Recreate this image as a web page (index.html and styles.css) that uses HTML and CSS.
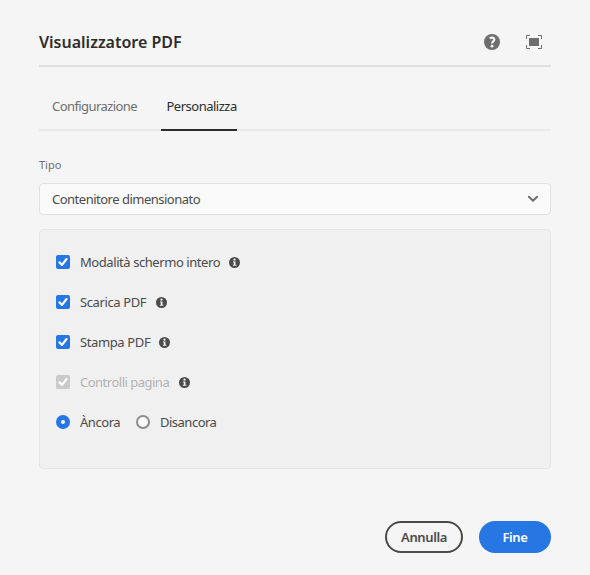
FILE: index.html
```html
<!DOCTYPE html>
<html lang="it">
<head>
<meta charset="utf-8">
<title>Visualizzatore PDF</title>
<link rel="stylesheet" href="styles.css">
</head>
<body>
<svg width="0" height="0" class="defs">
  <symbol id="info" viewBox="0 0 11 11"><circle cx="5.5" cy="5.5" r="5.5" fill="#4b4b4b"/><circle cx="5.5" cy="2.7" r="1.15" fill="#f0f0f0"/><path d="M4 4.5h2.5v3.3H7.4v1H3.9v-1h.9V5.5H4z" fill="#f0f0f0"/></symbol>
  <symbol id="check" viewBox="0 0 14 14"><path d="M3.5 7.400l2.500 2.500 4.600-5.900" fill="none" stroke="#fff" stroke-width="2.200" stroke-linecap="round" stroke-linejoin="round"/></symbol>
</svg>
<main class="dialog">
  <header class="header">
    <h1 class="title">Visualizzatore PDF</h1>
    <div class="tools">
      <svg width="16" height="16" viewBox="0 0 16 16"><circle cx="8" cy="8" r="8" fill="#6e6e6e"/><path d="M5.7 4.3C7.6 3 10.3 3.5 10.3 5.6 10.3 7.4 8 7.4 8 9.6" fill="none" stroke="#f5f5f5" stroke-width="2.200"/><circle cx="8" cy="12.2" r="1.4" fill="#f5f5f5"/></svg>
      <svg width="16" height="14" viewBox="0 0 16 14"><path d="M3 3h10v8H3z" fill="#6e6e6e"/><path d="M.5 4V.5H4M12 .5h3.500V4M15.500 10v3.500H12M4 13.500H.5V10" fill="none" stroke="#6e6e6e"/></svg>
    </div>
  </header>
  <nav class="tabs">
    <a class="tab tab-config">Configurazione</a>
    <a class="tab tab-active">Personalizza</a>
  </nav>
  <label class="field-label">Tipo</label>
  <div class="select"><span class="select-text">Contenitore dimensionato</span>
    <svg width="12" height="8" viewBox="0 0 12 8"><path d="M1.900 1.800L6 5.700l4.100-3.900" fill="none" stroke="#6e6e6e" stroke-width="2" stroke-linecap="round" stroke-linejoin="round"/></svg>
  </div>
  <section class="panel">
    <div class="row"><svg class="box"><use href="#check"/></svg><span class="text mode">Modalità schermo intero</span><svg class="info"><use href="#info"/></svg></div>
    <div class="row"><svg class="box"><use href="#check"/></svg><span class="text download">Scarica PDF</span><svg class="info"><use href="#info"/></svg></div>
    <div class="row"><svg class="box"><use href="#check"/></svg><span class="text print">Stampa PDF</span><svg class="info"><use href="#info"/></svg></div>
    <div class="row disabled"><svg class="box"><use href="#check"/></svg><span class="text controls">Controlli pagina</span><svg class="info"><use href="#info"/></svg></div>
    <div class="row"><span class="radio radio-on"></span><span class="text dock">Àncora</span><span class="radio"></span><span class="text undock">Disancora</span></div>
  </section>
  <footer class="footer">
    <button class="button cancel"><span>Annulla</span></button>
    <button class="button done"><span>Fine</span></button>
  </footer>
</main>
</body>
</html>
```
FILE: styles.css
```css
* { box-sizing: border-box; }
body { margin: 0; background: #f5f5f5; font-family: "Noto Sans", sans-serif; font-size: 13px; color: #4b4b4b; }
.defs { display: block; }
.dialog { width: 590px; height: 575px; padding: 0 39px; white-space: nowrap; }
.header { height: 67px; padding-top: 19px; display: flex; align-items: center; justify-content: space-between; border-bottom: 2px solid #e0e0e0; }
.title { margin: 0; font-size: 16px; line-height: 24px; font-weight: 600; color: #2c2c2c; letter-spacing: 0; }
.tools { display: flex; align-items: center; gap: 26px; padding-right: 9px; }
.tabs { display: flex; margin-top: 16px; height: 48px; padding-left: 13px; border-bottom: 2px solid #eaeaea; }
.tab { height: 48px; line-height: 47px; color: #6e6e6e; letter-spacing: -.58px; }
.tab-config { width: 109px; }
.tab-active { width: 76px; padding-left: 5.5px; color: #2c2c2c; border-bottom: 2px solid #2c2c2c; letter-spacing: -.5px; }
.field-label { display: block; height: 18px; margin-top: 25px; font-size: 11px; line-height: 18px; color: #6e6e6e; }
.select { height: 32px; margin-top: 9px; padding: 0 11px 0 12px; border: 1px solid #e0e0e0; border-radius: 4px; background: #fafafa; display: flex; align-items: center; justify-content: space-between; letter-spacing: -.5px; }
.panel { height: 240px; margin-top: 14px; padding: 12px 16px; border: 1px solid #e6e6e6; border-radius: 4px; background: #f0f0f0; }
.row { height: 40px; display: flex; align-items: center; }
.box { width: 14px; height: 14px; border-radius: 2px; background: #2676e3; }
.info { width: 11px; height: 11px; }
.text { margin-left: 10px; letter-spacing: -.43px; }
.mode { width: 148.500px; }
.download { width: 75.500px; letter-spacing: -.38px; }
.print { width: 78.500px; letter-spacing: -.38px; }
.controls { width: 98.500px; letter-spacing: -.5px; }
.dock { width: 56px; letter-spacing: -.45px; }
.undock { letter-spacing: -.5px; }
.disabled { color: #b3b3b3; }
.disabled .box { background: #cacaca; }
.radio { width: 14px; height: 14px; border: 2px solid #8e8e8e; border-radius: 50%; background: #fafafa; }
.radio-on { border: 5px solid #2676e3; }
.footer { display: flex; justify-content: flex-end; gap: 16px; margin-top: 52px; }
.button { height: 32px; padding: 0; border-radius: 16px; font: 600 13px "Noto Sans", sans-serif; letter-spacing: -.4px; }
.cancel { width: 78px; border: 2px solid #4b4b4b; background: transparent; color: #4b4b4b; }
.done { width: 72px; border: 0; background: #2676e3; color: #fff; }
```
